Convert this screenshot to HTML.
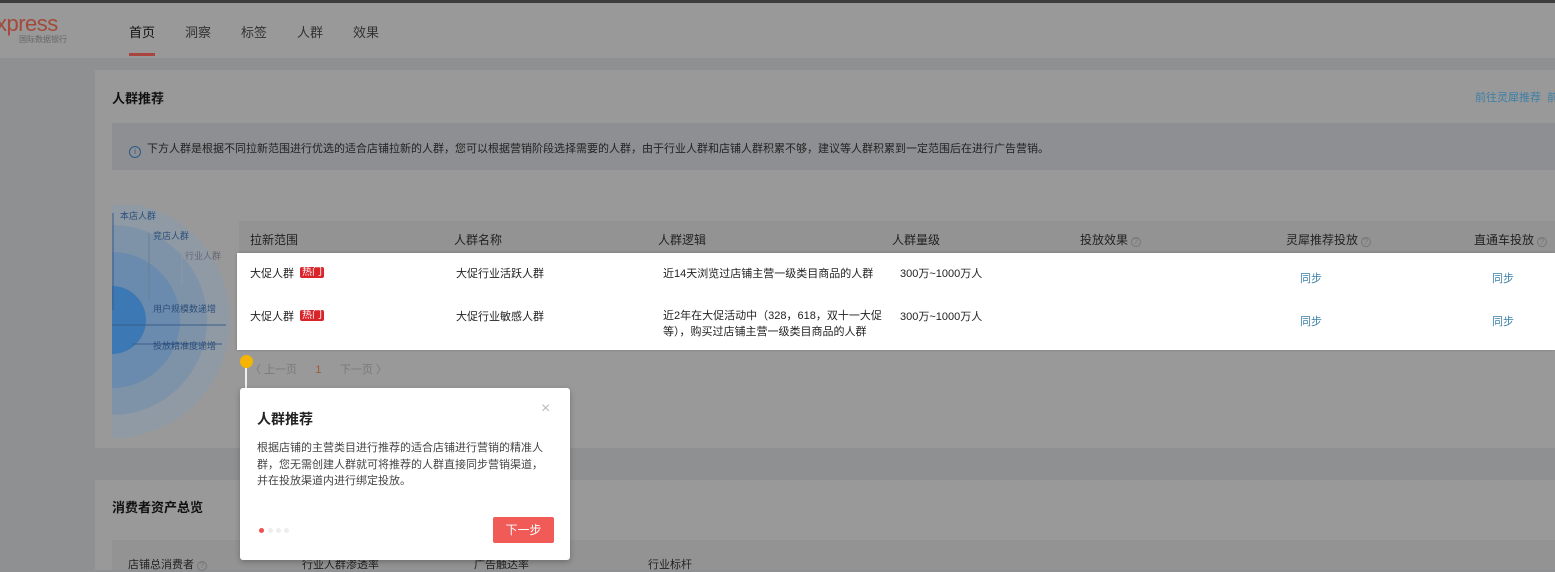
<!DOCTYPE html>
<html><head><meta charset="utf-8"><style>
*{margin:0;padding:0;box-sizing:border-box}
body{width:1555px;height:570px;overflow:hidden;background:#8f9091;font-family:"Liberation Sans","Noto Sans CJK SC",sans-serif;font-size:12px;color:#222;position:relative}
.a{position:absolute;white-space:nowrap}
.hot{display:inline-block;background:#d9242a;color:#fff;font-size:10px;line-height:11px;padding:0 2px;border-radius:2px;margin-left:6px;vertical-align:2px}
.blue{color:#3d7fa6}
.q{display:inline-block;width:10px;height:10px;border:1px solid #777;border-radius:50%;font-size:8px;line-height:8px;text-align:center;color:#777;margin-left:3px;vertical-align:0}
</style></head><body>
<div class="a" style="left:0;top:0;width:1555px;height:3px;background:#3d3d3d"></div>
<div class="a" style="left:0;top:3px;width:1555px;height:55px;background:#999999"></div>
<div class="a" style="left:-4px;top:11px;font-size:22px;color:#a34a3a;letter-spacing:-0.5px">xpress</div>
<div class="a" style="left:19px;top:34px;font-size:8px;color:#666">国际数据银行</div>
<div class="a" style="left:129px;top:22px;font-size:13px;color:#111">首页</div>
<div class="a" style="left:129px;top:53px;width:26px;height:3px;background:#a9443f"></div>
<div class="a" style="left:185px;top:22px;font-size:13px;color:#333">洞察</div>
<div class="a" style="left:241px;top:22px;font-size:13px;color:#333">标签</div>
<div class="a" style="left:297px;top:22px;font-size:13px;color:#333">人群</div>
<div class="a" style="left:353px;top:22px;font-size:13px;color:#333">效果</div>

<div class="a" style="left:95px;top:70px;width:1460px;height:378px;background:#999999"></div>
<div class="a" style="left:112px;top:88px;font-size:13px;font-weight:bold;color:#111">人群推荐</div>
<div class="a blue" style="left:1475px;top:89px;font-size:11px">前往灵犀推荐 &nbsp;前</div>
<div class="a" style="left:112px;top:123px;width:1443px;height:47px;background:#8e8f92"></div>
<div class="a" style="left:129px;top:140px;font-size:11px;color:#222"><span class="q" style="border-color:#2a5a8a;color:#2a5a8a;width:12px;height:12px;line-height:10px;margin:0 6px 0 0;vertical-align:-2px">i</span>下方人群是根据不同拉新范围进行优选的适合店铺拉新的人群，您可以根据营销阶段选择需要的人群，由于行业人群和店铺人群积累不够，建议等人群积累到一定范围后在进行广告营销。</div>

<svg class="a" style="left:112px;top:205px" width="128" height="240">
<circle cx="0" cy="115" r="118" fill="#8f9aa5"/>
<circle cx="0" cy="115" r="95" fill="#7f93a8"/>
<circle cx="0" cy="115" r="68" fill="#6a8bae"/>
<circle cx="0" cy="115" r="34" fill="#3c78b4"/>
<line x1="0" y1="120" x2="114" y2="120" stroke="#3a5c8a"/><line x1="20" y1="139" x2="110" y2="139" stroke="#3a5c8a"/>
<line x1="1" y1="8" x2="1" y2="105" stroke="#3a5c8a"/><line x1="37" y1="28" x2="37" y2="95" stroke="#6b7f93"/><line x1="70" y1="48" x2="70" y2="80" stroke="#8a98a5"/>
</svg>
<div class="a" style="left:120px;top:209px;font-size:9px;color:#2b4e7a">本店人群</div>
<div class="a" style="left:153px;top:229px;font-size:9px;color:#2b4e7a">竞店人群</div>
<div class="a" style="left:185px;top:249px;font-size:9px;color:#667">行业人群</div>
<div class="a" style="left:153px;top:302px;font-size:9px;color:#2b4e7a">用户规模数递增</div>
<div class="a" style="left:153px;top:339px;font-size:9px;color:#2b4e7a">投放精准度递增</div>

<div class="a" style="left:239px;top:221px;width:1316px;height:32px;background:#939393"></div>
<div class="a" style="left:250px;top:231px;font-size:12px">拉新范围</div>
<div class="a" style="left:454px;top:231px">人群名称</div>
<div class="a" style="left:658px;top:231px">人群逻辑</div>
<div class="a" style="left:892px;top:231px">人群量级</div>
<div class="a" style="left:1080px;top:231px">投放效果<span class="q">?</span></div>
<div class="a" style="left:1286px;top:231px">灵犀推荐投放<span class="q">?</span></div>
<div class="a" style="left:1474px;top:231px">直通车投放<span class="q">?</span></div>

<div class="a" style="left:237px;top:253px;width:1318px;height:97px;background:#fff;box-shadow:0 0 3px rgba(0,0,0,.2)"></div>
<div class="a" style="left:250px;top:265px;font-size:11px">大促人群<span class="hot">热门</span></div>
<div class="a" style="left:456px;top:265px;font-size:11px">大促行业活跃人群</div>
<div class="a" style="left:663px;top:265px;font-size:11px">近14天浏览过店铺主营一级类目商品的人群</div>
<div class="a" style="left:900px;top:265px;font-size:11px">300万~1000万人</div>
<div class="a blue" style="left:1300px;top:270px;font-size:11px">同步</div>
<div class="a blue" style="left:1492px;top:270px;font-size:11px">同步</div>
<div class="a" style="left:250px;top:308px;font-size:11px">大促人群<span class="hot">热门</span></div>
<div class="a" style="left:456px;top:308px;font-size:11px">大促行业敏感人群</div>
<div class="a" style="left:663px;top:308px;font-size:11px;line-height:16px">近2年在大促活动中（328，618，双十一大促<br>等），购买过店铺主营一级类目商品的人群</div>
<div class="a" style="left:900px;top:308px;font-size:11px">300万~1000万人</div>
<div class="a blue" style="left:1300px;top:313px;font-size:11px">同步</div>
<div class="a blue" style="left:1492px;top:313px;font-size:11px">同步</div>

<div class="a" style="left:250px;top:361px;font-size:11px;color:#7a7a7a">〈 上一页 &nbsp;&nbsp;&nbsp;&nbsp;&nbsp;<span style="color:#a05a3a">1</span> &nbsp;&nbsp;&nbsp;&nbsp;&nbsp;下一页 〉</div>
<div class="a" style="left:245px;top:360px;width:2px;height:30px;background:#eee"></div>
<div class="a" style="left:240px;top:355px;width:13px;height:13px;border-radius:50%;background:#f5b400"></div>

<div class="a" style="left:95px;top:480px;width:1460px;height:90px;background:#999999"></div>
<div class="a" style="left:112px;top:497px;font-size:13px;font-weight:bold;color:#111">消费者资产总览</div>
<div class="a" style="left:112px;top:540px;width:1443px;height:30px;background:#939393"></div>
<div class="a" style="left:128px;top:556px;font-size:11px">店铺总消费者<span class="q">?</span></div>
<div class="a" style="left:302px;top:556px;font-size:11px">行业人群渗透率</div>
<div class="a" style="left:474px;top:556px;font-size:11px">广告触达率</div>
<div class="a" style="left:648px;top:556px;font-size:11px">行业标杆</div>

<div class="a" style="left:240px;top:388px;width:330px;height:172px;background:#fff;border-radius:3px;box-shadow:0 2px 6px rgba(0,0,0,.25)"></div>
<div class="a" style="left:257px;top:409px;font-size:14px;font-weight:bold;color:#222">人群推荐</div>
<div class="a" style="left:541px;top:400px;font-size:16px;color:#bbb">×</div>
<div class="a" style="left:257px;top:440px;font-size:11px;line-height:16.5px;color:#444;white-space:normal;width:292px">根据店铺的主营类目进行推荐的适合店铺进行营销的精准人群，您无需创建人群就可将推荐的人群直接同步营销渠道，并在投放渠道内进行绑定投放。</div>
<div class="a" style="left:259px;top:528px;width:5px;height:5px;border-radius:50%;background:#f05050"></div>
<div class="a" style="left:268px;top:528px;width:5px;height:5px;border-radius:50%;background:#eee"></div>
<div class="a" style="left:276px;top:528px;width:5px;height:5px;border-radius:50%;background:#eee"></div>
<div class="a" style="left:284px;top:528px;width:5px;height:5px;border-radius:50%;background:#eee"></div>
<div class="a" style="left:493px;top:517px;width:61px;height:26px;background:#f05a57;border-radius:2px;color:#fff;font-size:12px;line-height:26px;text-align:center">下一步</div>
</body></html>
